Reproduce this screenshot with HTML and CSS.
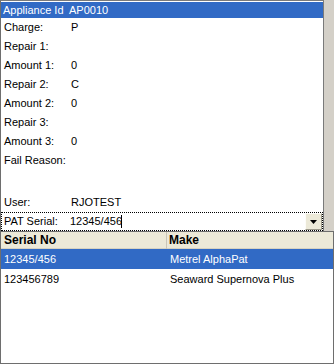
FILE: index.html
```html
<!DOCTYPE html>
<html>
<head>
<meta charset="utf-8">
<link rel="stylesheet" href="styles.css">
</head>
<body>
<div class="frame">
  <div class="top">
    <div class="panel">
      <div class="row sel"><span class="lab">Appliance Id</span><span>AP0010</span></div>
      <div class="row"><span class="lab">Charge:</span><span>P</span></div>
      <div class="row"><span class="lab">Repair 1:</span><span></span></div>
      <div class="row"><span class="lab">Amount 1:</span><span>0</span></div>
      <div class="row"><span class="lab">Repair 2:</span><span>C</span></div>
      <div class="row"><span class="lab">Amount 2:</span><span>0</span></div>
      <div class="row"><span class="lab">Repair 3:</span><span></span></div>
      <div class="row"><span class="lab">Amount 3:</span><span>0</span></div>
      <div class="row tall"><span class="lab">Fail Reason:</span><span></span></div>
      <div class="row"><span class="lab">User:</span><span>RJOTEST</span></div>
      <div class="combo">
        <span class="lab">PAT Serial:</span>
        <span class="val">12345/456<span class="caret"></span></span>
        <span class="btn"><svg width="7" height="4" viewBox="0 0 7 4"><polygon points="0,0 7,0 3.5,4" fill="#000"/></svg></span>
      </div>
    </div>
    <div class="strip"></div>
  </div>
  <div class="list">
    <div class="head">
      <div class="hc first">Serial No</div>
      <div class="hc">Make</div>
    </div>
    <div class="lrow selrow">
      <div class="c first">12345/456</div>
      <div class="c">Metrel AlphaPat</div>
    </div>
    <div class="lrow">
      <div class="c first">123456789</div>
      <div class="c">Seaward Supernova Plus</div>
    </div>
  </div>
</div>
</body>
</html>
```

FILE: styles.css
```css
html, body {
  margin: 0;
  padding: 0;
  background: #ffffff;
}
.frame {
  width: 334px;
  height: 364px;
  display: flex;
  flex-direction: column;
  font-family: "Liberation Sans", Arial, sans-serif;
  font-size: 11px;
  color: #000;
}
.top {
  display: flex;
  height: 231px;
}
.panel {
  width: 322px;
  height: 229px;
  padding-top: 1px;
  background: #fff;
  border-top: 1px solid #7a7a7a;
  border-left: 1px solid #6e6e6e;
  border-right: 1px solid #7a7a7a;
  display: flex;
  flex-direction: column;
}
.strip {
  flex: 1;
  background: #d4d0c8;
}
.row {
  display: grid;
  grid-template-columns: 67px 1fr;
  height: 19px;
  line-height: 19px;
  padding-left: 3px;
  white-space: nowrap;
}
.row.sel {
  height: 16px;
  line-height: 16px;
  grid-template-columns: 66px 1fr;
  padding-left: 2px;
  background: #316ac5;
  color: #fff;
}
.row.tall {
  height: 42px;
}
.combo {
  display: flex;
  align-items: center;
  height: 17px;
  line-height: 17px;
  border: 1px dotted #000;
  padding-left: 2px;
  white-space: nowrap;
}
.combo .lab {
  width: 66px;
}
.combo .val {
  flex: 1;
  display: flex;
  align-items: center;
}
.caret {
  display: inline-block;
  width: 1px;
  height: 13px;
  background: #000;
  margin-left: -1px;
}
.btn {
  width: 15px;
  height: 15px;
  background: #ece9d8;
  border: 1px solid;
  border-color: #fdfcf8 #9d9a8c #9d9a8c #fdfcf8;
  display: flex;
  align-items: center;
  justify-content: center;
}
.btn svg {
  display: block;
  margin-top: 1px;
}
.list {
  flex: 1;
  border: 1px solid #6e6e6e;
  background: #fff;
}
.head {
  display: grid;
  grid-template-columns: 166px 1fr;
  height: 17px;
  line-height: 17px;
  background: #ece9d8;
  font-size: 12px;
  font-weight: bold;
  box-shadow: inset 0 -1px 0 #d6d2c2;
}
.hc {
  padding-left: 2px;
  white-space: nowrap;
}
.hc.first {
  padding-left: 3px;
  border-right: 1px solid #c9c5b8;
}
.lrow {
  display: grid;
  grid-template-columns: 166px 1fr;
  height: 20px;
  line-height: 20px;
  white-space: nowrap;
}
.c {
  padding-left: 3px;
}
.selrow {
  background: #316ac5;
  color: #fff;
}
```
